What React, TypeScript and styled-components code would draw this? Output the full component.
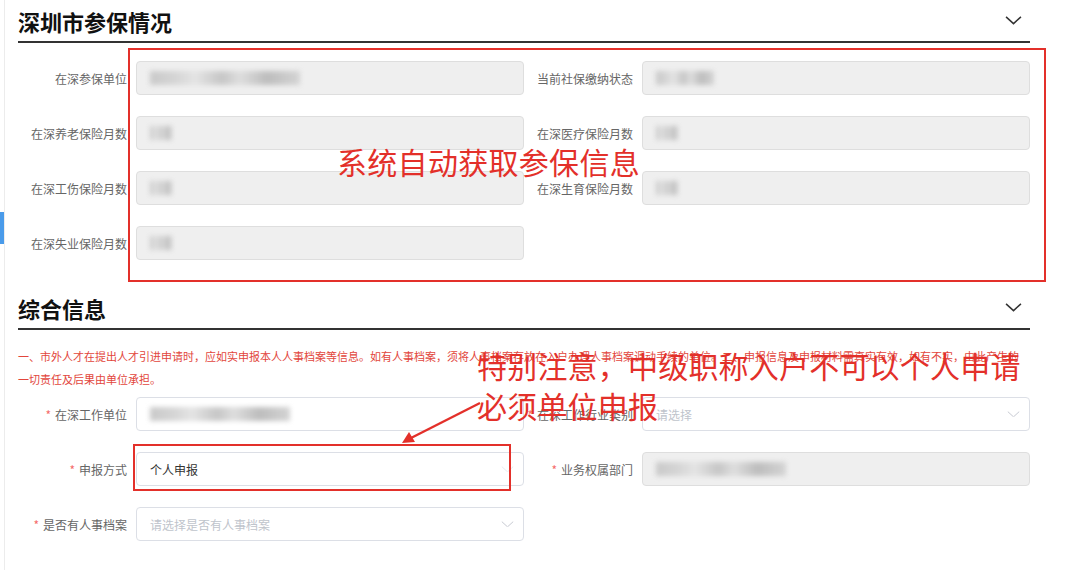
import styled, { createGlobalStyle } from 'styled-components'

const GlobalStyle = createGlobalStyle`
  html, body {
    margin: 0;
    padding: 0;
    background: #fff;
  }
  body {
    font-family: "Noto Sans CJK SC", "Noto Sans", sans-serif;
    color: #333;
  }
`

const Page = styled.div`
  display: flex;
  min-height: 570px;
  overflow: hidden;
`

const Rail = styled.div`
  width: 4px;
  flex-shrink: 0;
  border-right: 1px solid #ececec;
`

const RailMark = styled.div`
  margin-top: 212px;
  height: 32px;
  background: #4a9bea;
`

const Main = styled.main`
  margin-left: 13px;
  width: 1012px;
`

const SectionHeader = styled.div`
  height: 41px;
  display: flex;
  align-items: center;
  justify-content: space-between;
  padding-right: 8px;
  border-bottom: 2px solid #333;
`

const Title = styled.h2`
  margin: 0;
  font-size: 22px;
  line-height: 30px;
  font-weight: 700;
  color: #111;
`

const Body = styled.div<{ $pad: string }>`
  position: relative;
  display: flow-root;
  padding: ${(p) => p.$pad};
`

const Notice = styled.p`
  margin: 15px 0 6px;
  font-size: 11px;
  line-height: 23px;
  color: #e2463c;
  white-space: nowrap;
`

const FormGrid = styled.div`
  display: grid;
  grid-template-columns: 1fr 1fr;
  row-gap: 21px;
`

const Field = styled.div`
  display: grid;
  grid-template-columns: 118px 1fr;
  align-items: center;
`

const Label = styled.label`
  text-align: right;
  padding-right: 9px;
  font-size: 12px;
  color: #666;
  white-space: nowrap;
`

const Star = styled.span`
  color: #f56c6c;
  margin-right: 4px;
`

const Input = styled.div<{ $disabled?: boolean }>`
  height: 34px;
  box-sizing: border-box;
  border: 1px solid ${(p) => (p.$disabled ? '#dedede' : '#dcdfe6')};
  border-radius: 4px;
  background: ${(p) => (p.$disabled ? '#efefef' : '#fff')};
  display: flex;
  align-items: center;
  justify-content: space-between;
  padding: 0 9px 0 13px;
  font-size: 12px;
`

const Value = styled.span<{ $placeholder?: boolean }>`
  color: ${(p) => (p.$placeholder ? '#c0c4cc' : '#333')};
`

const Redacted = styled.span<{ $w: number }>`
  display: block;
  width: ${(p) => p.$w}px;
  height: 14px;
  background: linear-gradient(
    90deg,
    #c9c9c9 0%,
    #d6d6d6 18%,
    #e4e4e4 30%,
    #c6c6c6 48%,
    #dedede 60%,
    #bdbdbd 78%,
    #d4d4d4 100%
  );
  filter: blur(2.5px);
`

const Chevron = ({ size = 17, color = '#333', sw = 1.4 }: { size?: number; color?: string; sw?: number }) => (
  <svg width={size} height={size / 2} viewBox="0 0 16 8" fill="none">
    <polyline points="1,0.8 8,7.2 15,0.8" stroke={color} strokeWidth={sw} />
  </svg>
)

const MarkBox = styled.div<{ $l: number; $t: number; $w: number; $h: number }>`
  position: absolute;
  left: ${(p) => p.$l}px;
  top: ${(p) => p.$t}px;
  width: ${(p) => p.$w}px;
  height: ${(p) => p.$h}px;
  box-sizing: border-box;
  border: 2px solid #e3302a;
  pointer-events: none;
`

const MarkText = styled.div<{ $l: number; $t: number; $size: number; $ls: number }>`
  position: absolute;
  left: ${(p) => p.$l}px;
  top: ${(p) => p.$t}px;
  font-size: ${(p) => p.$size}px;
  line-height: 40px;
  color: #e3302a;
  white-space: nowrap;
  letter-spacing: ${(p) => p.$ls}px;
`

const ArrowSvg = styled.svg`
  position: absolute;
  left: 377px;
  top: 68px;
`

type F = {
  label: string
  req?: boolean
  disabled?: boolean
  blur?: number
  value?: string
  placeholder?: string
  select?: boolean
  chevronColor?: string
}

const FormField = ({ label, req, disabled, blur, value, placeholder, select, chevronColor }: F) => (
  <Field>
    <Label>
      {req && <Star>*</Star>}
      {label}
    </Label>
    <Input $disabled={disabled}>
      {blur ? <Redacted $w={blur} /> : null}
      {value && <Value>{value}</Value>}
      {placeholder && <Value $placeholder>{placeholder}</Value>}
      {select && <Chevron size={13} color={chevronColor ?? '#c0c4cc'} sw={1.1} />}
    </Input>
  </Field>
)

export default function App() {
  return (
    <Page>
      <GlobalStyle />
      <Rail>
        <RailMark />
      </Rail>
      <Main>
        <SectionHeader>
          <Title>深圳市参保情况</Title>
          <Chevron />
        </SectionHeader>
        <Body $pad="18px 0 27px">
          <FormGrid>
            <FormField label="在深参保单位" disabled blur={150} />
            <FormField label="当前社保缴纳状态" disabled blur={58} />
            <FormField label="在深养老保险月数" disabled blur={22} />
            <FormField label="在深医疗保险月数" disabled blur={22} />
            <FormField label="在深工伤保险月数" disabled blur={22} />
            <FormField label="在深生育保险月数" disabled blur={22} />
            <FormField label="在深失业保险月数" disabled blur={22} />
          </FormGrid>
          <MarkBox $l={110} $t={5} $w={918} $h={234} />
          <MarkText $l={319} $t={98} $size={30} $ls={0.3}>
            系统自动获取参保信息
          </MarkText>
        </Body>

        <SectionHeader>
          <Title>综合信息</Title>
          <Chevron />
        </SectionHeader>
        <Body $pad="0">
          <Notice>
            一、市外人才在提出人才引进申请时，应如实申报本人人事档案等信息。如有人事档案，须将人事档案存放在入户办理人事档案调动手续的单位。二、申报信息及申报材料需真实有效，如有不实，由此产生的
            <br />
            一切责任及后果由单位承担。
          </Notice>
          <FormGrid>
            <FormField label="在深工作单位" req blur={140} />
            <FormField label="在深工作行业类别" req placeholder="请选择" select />
            <FormField label="申报方式" req value="个人申报" select chevronColor="#e4e7ed" />
            <FormField label="业务权属部门" req disabled blur={130} />
            <FormField label="是否有人事档案" req placeholder="请选择是否有人事档案" select />
          </FormGrid>
          <MarkBox $l={115} $t={114} $w={378} $h={47} />
          <MarkText $l={459} $t={15} $size={30} $ls={0.2}>
            特别注意，中级职称入户不可以个人申请
            <br />
            必须单位申报
          </MarkText>
          <ArrowSvg width="90" height="50" viewBox="0 0 90 50">
            <line x1="85" y1="5" x2="16" y2="40" stroke="#e3302a" strokeWidth="2.4" />
            <polygon points="7,45 14,34 20,44" fill="#e3302a" />
          </ArrowSvg>
        </Body>
      </Main>
    </Page>
  )
}
